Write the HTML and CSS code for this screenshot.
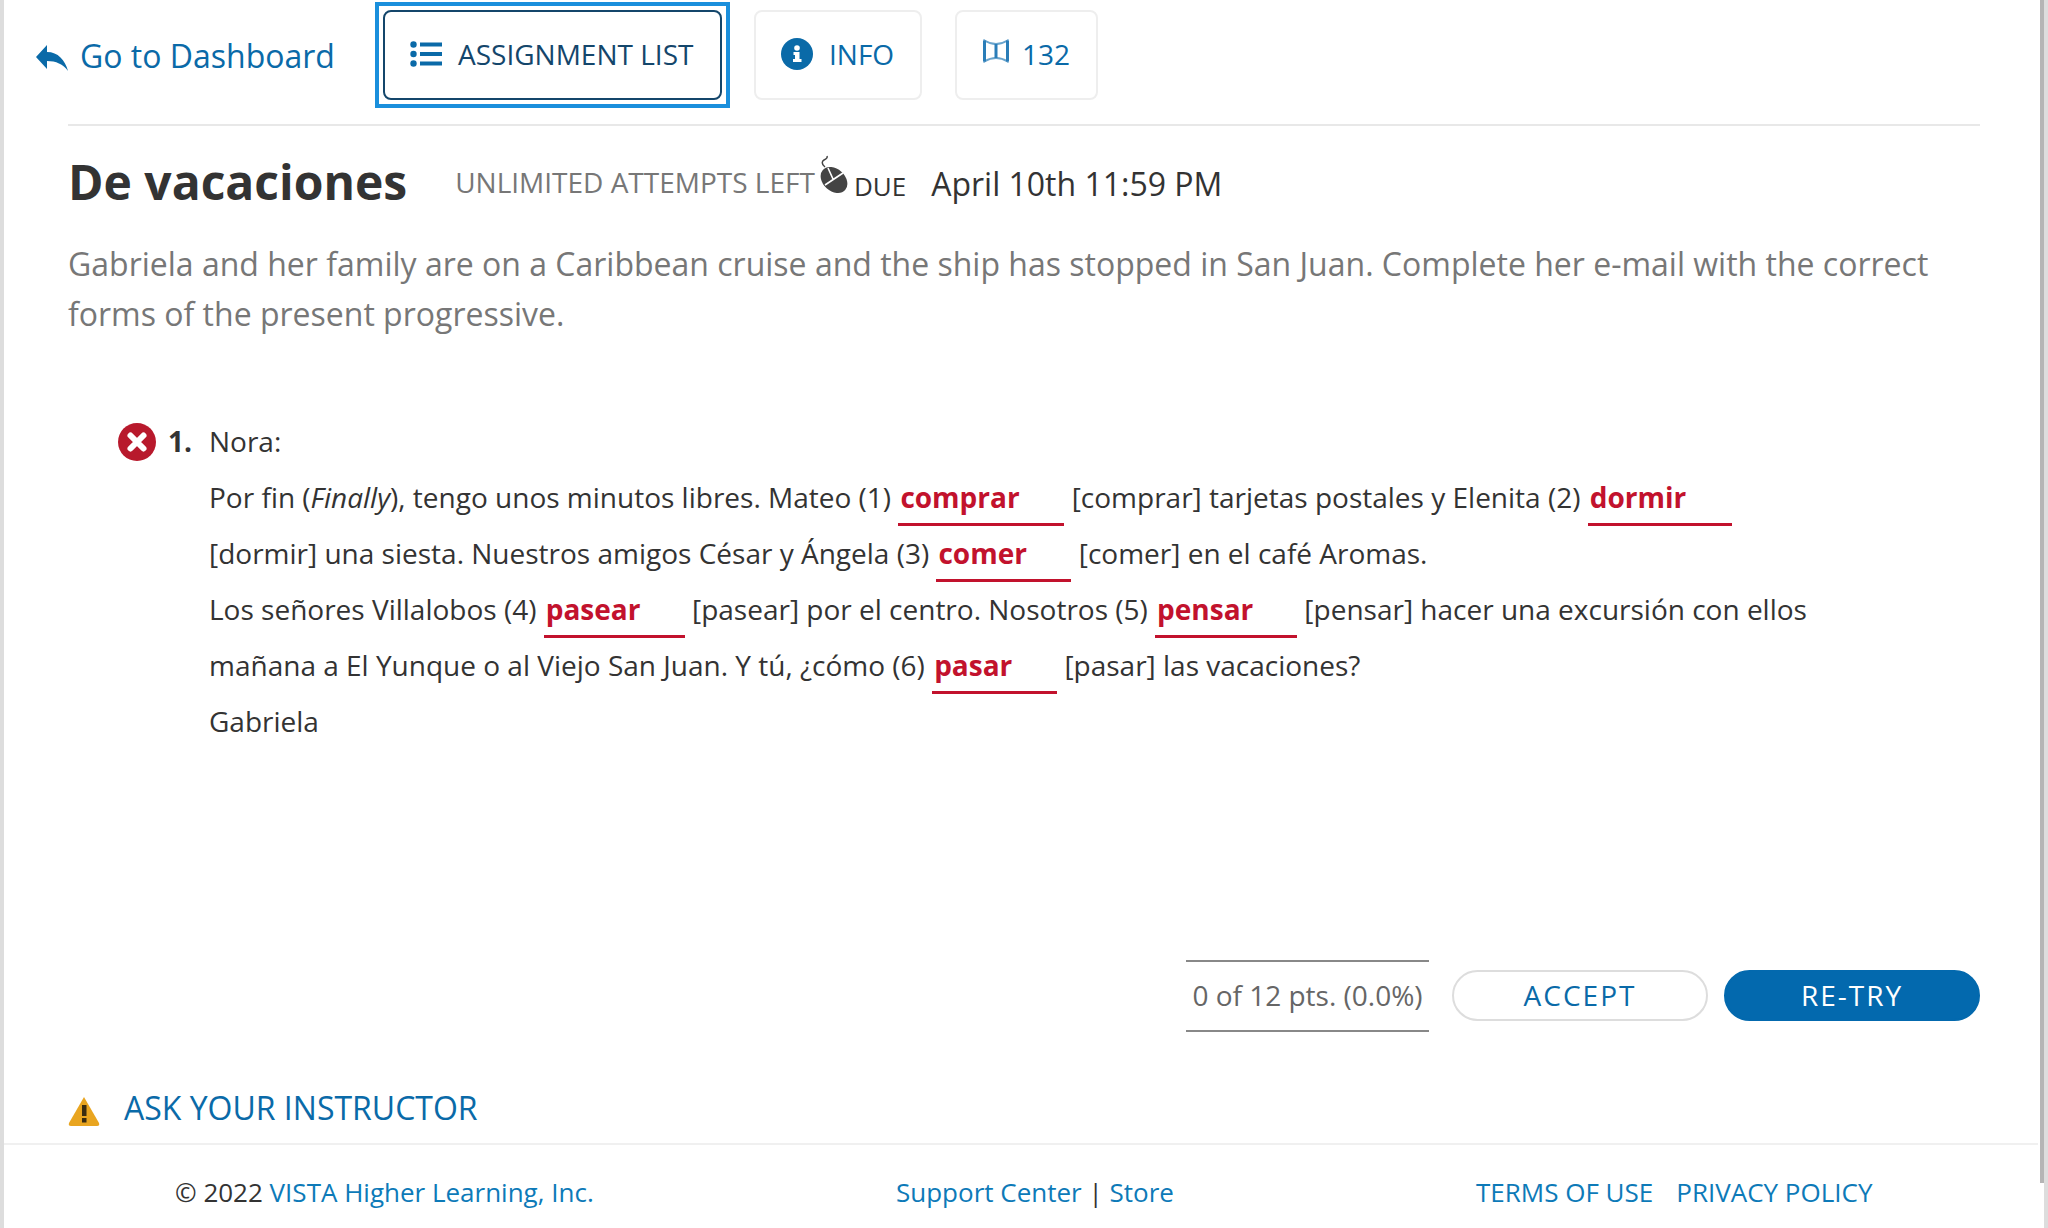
FILE: index.html
```html
<!DOCTYPE html>
<html lang="en">
  <head>
    <meta charset="UTF-8" />
    <title>De vacaciones</title>
    <link rel="stylesheet" href="styles.css">
  </head>
  <body>
    <header class="topbar">
      <a class="back-link" href="#">
        <svg class="back-icon" viewBox="0 0 32 26"><path d="M0 12 L11 0 V7 C22 7 29 15 32 26 C27 19 20 16 11 16 V24 Z"/></svg>
        Go to Dashboard
      </a>
      <div class="focus-ring">
        <a class="tab tab-active" href="#">
          <svg class="list-icon" viewBox="0 0 32 26"><circle cx="3.500" cy="3.500" r="3.200"/><circle cx="3.500" cy="13" r="3.200"/><circle cx="3.500" cy="22.500" r="3.200"/><rect x="10" y="1.500" width="22" height="4"/><rect x="10" y="11" width="22" height="4"/><rect x="10" y="20.500" width="22" height="4"/></svg>
          ASSIGNMENT LIST
        </a>
      </div>
      <a class="tab tab-info" href="#">
        <svg class="info-icon" viewBox="0 0 32 32"><circle cx="16" cy="16" r="16"/><circle cx="16" cy="10" r="2.800" fill="#fff"/><path d="M12.500 14 H18.500 V21 H20.500 V24 H12 V21 H14 V17 H12.500 Z" fill="#fff"/></svg>
        INFO
      </a>
      <a class="tab tab-book" href="#">
        <svg class="book-icon" viewBox="0 0 26 24"><path d="M1.500 1.500 Q7 5 13 5 Q19 5 24.500 1.500 V22.500 Q19 19 13 19 Q7 19 1.500 22.500 Z" fill="none" stroke-width="2" stroke-opacity="0.700"/><path d="M1.500 1.500 V22.500 M13 5 V19 M24.500 1.500 V22.500" fill="none" stroke-width="3"/></svg>
        132
      </a>
    </header>

    <main class="content">
      <div class="title-row">
        <h1>De vacaciones</h1>
        <span class="attempts">UNLIMITED ATTEMPTS LEFT</span>
        <svg class="mouse-icon" viewBox="0 0 28 38"><path d="M5 12 C1 9 2 6 4 5 C6 4 8 3 7 1" fill="none" stroke="#444" stroke-width="1.500"/><ellipse cx="14" cy="25" rx="15" ry="11" transform="rotate(42 14 25)" fill="#444"/><path d="M5 30 L23 18 M13 24 L8 13" stroke="#fff" stroke-width="1.600" fill="none"/></svg>
        <span class="due">DUE</span>
        <span class="due-date">April 10th 11:59 PM</span>
      </div>
      <p class="intro">Gabriela and her family are on a Caribbean cruise and the ship has stopped in San Juan. Complete her e-mail with the correct forms of the present progressive.</p>

      <section class="question">
        <div class="question-mark">
          <svg class="wrong-icon" viewBox="0 0 38 38"><circle cx="19" cy="19" r="19"/><path d="M12.500 12.500 L25.500 25.500 M25.500 12.500 L12.500 25.500" stroke="#fff" stroke-width="6" stroke-linecap="round"/></svg>
          <b>1.</b>
        </div>
        <div class="question-text">
          <div>Nora:</div>
          <div>Por fin (<i>Finally</i>), tengo unos minutos libres. Mateo (1) <span class="blank w-166">comprar</span> [comprar] tarjetas postales y Elenita (2) <span class="blank w-144">dormir</span></div>
          <div>[dormir] una siesta. Nuestros amigos César y Ángela (3) <span class="blank w-135">comer</span> [comer] en el café Aromas.</div>
          <div>Los señores Villalobos (4) <span class="blank w-141">pasear</span> [pasear] por el centro. Nosotros (5) <span class="blank w-142">pensar</span> [pensar] hacer una excursión con ellos</div>
          <div>mañana a El Yunque o al Viejo San Juan. Y tú, ¿cómo (6) <span class="blank w-125">pasar</span> [pasar] las vacaciones?</div>
          <div>Gabriela</div>
        </div>
      </section>

      <div class="actions">
        <div class="score">0 of 12 pts. (0.0%)</div>
        <a class="pill pill-outline" href="#">ACCEPT</a>
        <a class="pill pill-solid" href="#">RE-TRY</a>
      </div>

      <a class="ask" href="#">
        <svg class="warn-icon" viewBox="0 0 32 30"><path d="M16 1 L31 27 Q32 30 29 30 H3 Q0 30 1 27 Z" fill="#e9a520"/><rect x="14" y="9" width="4.500" height="11" fill="#3a2c10"/><rect x="14" y="22" width="4.500" height="4.500" fill="#3a2c10"/></svg>
        ASK YOUR INSTRUCTOR
      </a>
    </main>

    <footer class="footer">
      <div class="copy">© 2022 <a href="#">VISTA Higher Learning, Inc.</a></div>
      <div class="help"><a href="#">Support Center</a> | <a href="#">Store</a></div>
      <div class="legal"><a href="#">TERMS OF USE</a><a href="#">PRIVACY POLICY</a></div>
    </footer>

    <div class="scroll-thumb"></div>
  </body>
</html>
```

FILE: styles.css
```css
html,
body {
  margin: 0;
  padding: 0;
  height: 100%;
}

body {
  width: 2048px;
  height: 1228px;
  box-sizing: border-box;
  border-left: 4px solid #ddd;
  border-right: 4px solid #ddd;
  background-color: #fff;
  color: #333;
  font-family: "Open Sans", sans-serif;
  display: flex;
  flex-direction: column;
  overflow: hidden;
  position: relative;
}

a {
  color: #0a6aa8;
  text-decoration: none;
}

/* Top bar */
.topbar {
  display: flex;
  align-items: flex-start;
  box-sizing: border-box;
  height: 124px;
  padding: 2px 0 0 32px;
}

.back-link {
  display: flex;
  align-items: center;
  gap: 12px;
  width: 339px;
  height: 106px;
  font-size: 32px;
}

.back-icon {
  width: 32px;
  height: 26px;
  fill: #0a6aa8;
  margin-top: 6px;
}

.focus-ring {
  border: 4px solid #1a8fdc;
  padding: 4px;
  margin-right: 24px;
  display: flex;
}

.tab {
  display: flex;
  align-items: center;
  box-sizing: border-box;
  height: 90px;
  padding-bottom: 2px;
  border: 2px solid #eee;
  border-radius: 8px;
  font-size: 28px;
}

.focus-ring + .tab {
  margin-top: 8px;
}

.tab-active {
  width: 339px;
  padding-left: 25px;
  gap: 16px;
  border-color: #14466b;
  color: #14466b;
}

.tab-info {
  width: 168px;
  padding-left: 25px;
  gap: 16px;
  margin-right: 33px;
}

.tab-book {
  width: 143px;
  margin-top: 8px;
  padding-left: 26px;
  gap: 13px;
}

.list-icon {
  width: 32px;
  height: 26px;
  fill: #0a6aa8;
}

.info-icon {
  width: 32px;
  height: 32px;
  fill: #0a6aa8;
}

.book-icon {
  width: 26px;
  height: 24px;
  stroke: #2a7db8;
  margin-top: -6px;
}

/* Main content */
.content {
  flex: 1;
  margin: 0 64px;
  border-top: 2px solid #e8e8e8;
  display: flex;
  flex-direction: column;
}

.title-row {
  display: flex;
  align-items: center;
  padding-top: 23px;
}

h1 {
  margin: 0 48px 0 0;
  font-size: 48px;
  font-weight: 700;
}

.attempts {
  font-size: 28px;
  color: #777;
}

.mouse-icon {
  align-self: flex-start;
  width: 28px;
  height: 38px;
  margin: 6px 6px 0 5px;
}

.due {
  font-size: 26px;
  margin: 8px 25px 0 0;
}

.due-date {
  font-size: 32px;
  margin-top: 3px;
}

.intro {
  margin: 25px 0 0 0;
  font-size: 32px;
  line-height: 50px;
  color: #777;
}

.question {
  display: flex;
  margin-top: 74px;
  padding-left: 50px;
  font-size: 28px;
  line-height: 56px;
}

.question-mark {
  display: flex;
  align-items: center;
  height: 56px;
  gap: 12px;
  width: 91px;
}

.wrong-icon {
  width: 38px;
  height: 38px;
  margin-top: 2px;
  fill: #b8192c;
}

.blank {
  display: inline-block;
  box-sizing: border-box;
  line-height: 40px;
  padding: 0 0 6px 2px;
  margin-bottom: -2px;
  border-bottom: 3px solid #c2122d;
  color: #c2122d;
  font-weight: 700;
}

.w-166 { width: 166px; }
.w-144 { width: 144px; }
.w-135 { width: 135px; }
.w-141 { width: 141px; }
.w-142 { width: 142px; }
.w-125 { width: 125px; }

/* Score and buttons */
.actions {
  display: flex;
  align-items: center;
  justify-content: flex-end;
  margin-top: 209px;
}

.score {
  box-sizing: border-box;
  width: 243px;
  height: 72px;
  margin: 2px 23px 0 0;
  line-height: 66px;
  text-align: center;
  border-top: 2px solid #888;
  border-bottom: 2px solid #888;
  font-size: 28px;
  color: #666;
}

.pill {
  box-sizing: border-box;
  width: 256px;
  height: 51px;
  line-height: 46px;
  text-align: center;
  border-radius: 26px;
  font-size: 28px;
  letter-spacing: 2px;
}

.pill-outline {
  border: 2px solid #ddd;
  margin-right: 16px;
}

.pill-solid {
  border: 2px solid #0369ae;
  background-color: #0369ae;
  color: #fff;
}

.ask {
  display: flex;
  align-items: center;
  gap: 24px;
  margin-top: 54px;
  font-size: 32px;
}

.warn-icon {
  width: 32px;
  height: 30px;
  margin-top: 7px;
}

/* Footer */
.footer {
  box-sizing: border-box;
  height: 85px;
  margin-right: 6px;
  border-top: 2px solid #f0f0f0;
  padding: 10px 0 0 171px;
  display: flex;
  align-items: center;
  font-size: 26px;
}

.footer a {
  color: #0d7ab8;
}

.copy {
  width: 721px;
}

.help {
  width: 580px;
}

.legal {
  display: flex;
  gap: 23px;
}

/* Page scrollbar thumb drawn over the edge */
.scroll-thumb {
  position: absolute;
  top: 0;
  right: -2px;
  width: 6px;
  height: 1183px;
  background-color: #b5b5b5;
}
```
